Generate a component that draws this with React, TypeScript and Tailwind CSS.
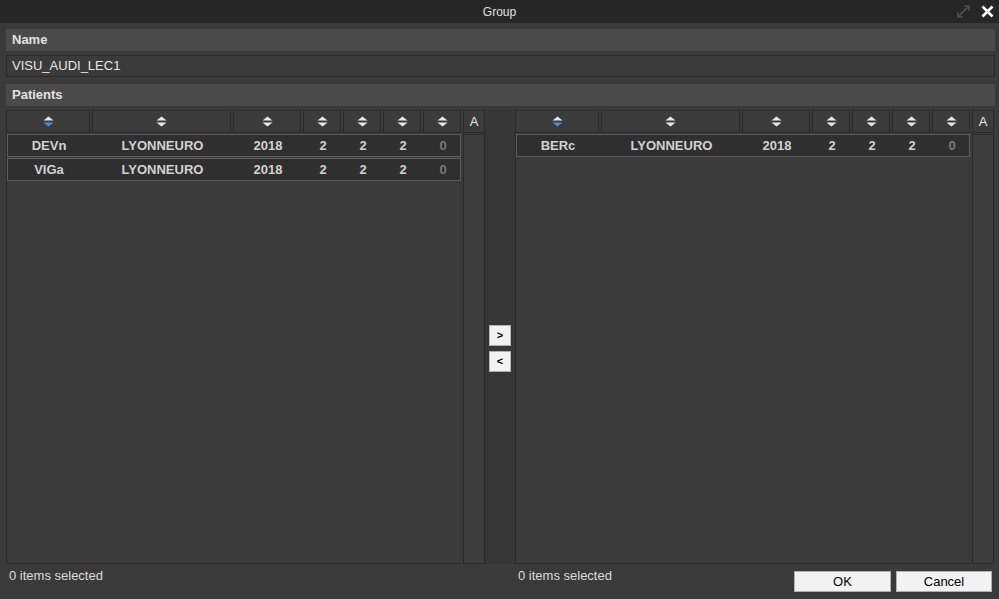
import React from "react";

const font = { fontFamily: '"Liberation Sans", Arial, sans-serif' };

function SortIcon({ active }: { active?: boolean }) {
  return (
    <svg width="11" height="11" viewBox="0 0 11 11">
      <polygon points="5.5,0.5 10.5,4.5 0.5,4.5" fill="#e8e8e8" />
      <polygon points="0.5,6.5 10.5,6.5 5.5,10.5" fill={active ? "#4a8fd8" : "#e8e8e8"} />
    </svg>
  );
}

const widths = ["w-[84px]", "w-[139px]", "w-[68px]", "w-[38px]", "w-[38px]", "w-[38px]", "w-[38px]"];

type Row = [string, string, string, string, string, string, string];

function Table({ rows }: { rows: Row[] }) {
  return (
    <div className="flex w-[479px] flex-col">
      <div className="flex">
        <div className="flex gap-[2px]">
          {widths.map((w, i) => (
            <div
              key={i}
              className={`${w} h-[23px] flex items-center justify-center border border-[#2b2b2b] bg-[#3b3b3b]`}
            >
              <SortIcon active={i === 0} />
            </div>
          ))}
        </div>
        <div className="ml-[2px] w-[22px] h-[23px] flex items-center justify-center border border-[#2b2b2b] bg-[#3b3b3b] text-[13px] text-[#e6e6e6]">
          A
        </div>
      </div>
      <div className="flex flex-1 mt-px">
        <div className="w-[455px] flex flex-col border-b border-l border-[#2a2a2a] bg-[#3a3a3a]">
          {rows.map((r, ri) => (
            <div
              key={ri}
              className="flex h-[23px] mb-px items-center gap-[2px] border border-[#5c5c5c] bg-[#2f2f2f] pt-px text-[13px] font-bold text-[#d2d2d2]"
            >
              {r.map((c, ci) => (
                <div
                  key={ci}
                  className={`${widths[ci]} shrink-0 text-center ${ci === 0 ? "-ml-px" : ""} ${ci === 6 ? "text-[#7a7a7a]" : ""}`}
                >
                  {c}
                </div>
              ))}
            </div>
          ))}
        </div>
        <div className="ml-[2px] w-[22px] border border-[#2a2a2a] bg-[#3d3d3d]" />
      </div>
    </div>
  );
}

export default function App() {
  return (
    <div style={font} className="w-[999px] h-[599px] bg-[#3a3a3a] flex flex-col overflow-hidden">
      <div className="h-[23px] bg-[#262626] relative flex items-center justify-center text-[12px] text-[#e0e0e0]">
        Group
        <svg className="absolute left-[957px] top-[5px]" width="13" height="13" viewBox="0 0 13 13">
          <path d="M1 12 L12 1 M7 1 H12 V6 M1 7 V12 H6" stroke="#4e4e4e" strokeWidth="1.6" fill="none" />
        </svg>
        <svg className="absolute left-[981px] top-[5px]" width="13" height="13" viewBox="0 0 13 13">
          <path d="M1.5 1.5 L11.5 11.5 M11.5 1.5 L1.5 11.5" stroke="#ffffff" strokeWidth="2.6" />
        </svg>
      </div>
      <div className="flex flex-1 flex-col pl-[6px] pr-[4px] pt-[6px]">
        <div className="h-[22px] bg-[#4a4a4a] flex items-center pl-[6px] text-[13px] font-bold text-[#e2e2e2]">
          Name
        </div>
        <div className="mt-[4px] h-[22px] border border-[#2a2a2a] flex items-center pl-[5px] text-[13px] text-[#e6e6e6]">
          VISU_AUDI_LEC1
        </div>
        <div className="mt-[7px] h-[22px] bg-[#4a4a4a] flex items-center pl-[6px] text-[13px] font-bold text-[#e2e2e2]">
          Patients
        </div>
        <div className="mt-[4px] h-[454px] flex">
          <Table
            rows={[
              ["DEVn", "LYONNEURO", "2018", "2", "2", "2", "0"],
              ["VIGa", "LYONNEURO", "2018", "2", "2", "2", "0"],
            ]}
          />
          <div className="w-[30px] flex flex-col items-center gap-[5px] bg-[#363636] pt-[215px]">
            <button className="w-[22px] h-[21px] bg-[#f2f2f2] border border-[#b0b0b0] text-[11px] font-bold text-black flex items-center justify-center">
              &gt;
            </button>
            <button className="w-[22px] h-[21px] bg-[#f2f2f2] border border-[#b0b0b0] text-[11px] font-bold text-black flex items-center justify-center">
              &lt;
            </button>
          </div>
          <Table rows={[["BERc", "LYONNEURO", "2018", "2", "2", "2", "0"]]} />
        </div>
        <div className="flex flex-1 relative">
          <div className="w-[509px] pl-[3px] pt-[2px] text-[13px] text-[#dcdcdc]">0 items selected</div>
          <div className="pl-[3px] pt-[2px] text-[13px] text-[#dcdcdc]">0 items selected</div>
          <div className="absolute right-[3px] top-[7px] flex gap-[5px]">
            <button className="w-[97px] h-[21px] bg-[#f2f2f2] border border-[#b0b0b0] pt-px text-[13px] text-black flex items-center justify-center">
              OK
            </button>
            <button className="w-[96px] h-[21px] bg-[#f2f2f2] border border-[#b0b0b0] pt-px text-[13px] text-black flex items-center justify-center">
              Cancel
            </button>
          </div>
        </div>
      </div>
    </div>
  );
}
